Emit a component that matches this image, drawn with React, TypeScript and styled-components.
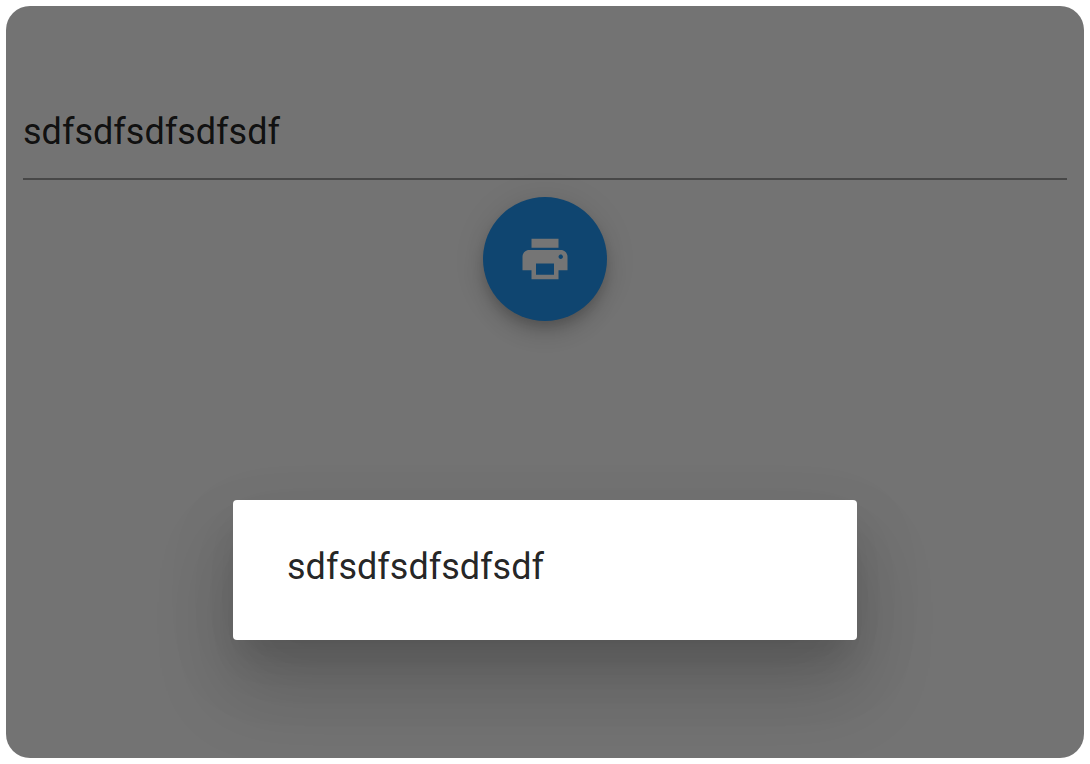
import { useState } from "react";
import styled, { createGlobalStyle } from "styled-components";
import { MdPrint } from "react-icons/md";

const GlobalStyle = createGlobalStyle`
  *, *::before, *::after {
    box-sizing: border-box;
  }

  body {
    margin: 0;
    background: #ffffff;
    font-family: Roboto, "Liberation Sans", sans-serif;
    font-size: 36px;
    line-height: 42px;
    color: rgba(0, 0, 0, 0.87);
  }
`;

const Page = styled.div`
  display: grid;
  min-height: 100vh;
  padding: 6px;
`;

const Screen = styled.div`
  position: relative;
  overflow: hidden;
  border-radius: 24px;
  background: #fafafa;
`;

const Form = styled.form`
  display: flex;
  flex-direction: column;
  align-items: center;
  gap: 17px;
  padding: 80px 17px 17px;
`;

const TextField = styled.input`
  width: 100%;
  height: 94px;
  padding: 0 0 1px;
  border: 0;
  border-bottom: 2px solid rgba(0, 0, 0, 0.38);
  border-radius: 0;
  outline: 0;
  background: transparent;
  color: inherit;
  font: inherit;
`;

const PrintButton = styled.button`
  display: flex;
  align-items: center;
  justify-content: center;
  width: 124px;
  height: 124px;
  padding: 0;
  border: 0;
  border-radius: 50%;
  background: #2196f3;
  color: #ffffff;
  font-size: 54px;
  box-shadow:
    0 7px 11px -2px rgba(0, 0, 0, 0.14),
    0 13px 22px 0 rgba(0, 0, 0, 0.12),
    0 2px 32px 0 rgba(0, 0, 0, 0.1);
`;

const Backdrop = styled.div`
  position: absolute;
  inset: 0;
  display: flex;
  align-items: flex-end;
  justify-content: center;
  padding: 0 88px 118px;
  background: rgba(0, 0, 0, 0.54);
`;

const Dialog = styled.div`
  width: 100%;
  max-width: 624px;
  padding: 46px 54px 52px;
  border-radius: 4px;
  background: #ffffff;
  box-shadow:
    0 24px 33px -10px rgba(0, 0, 0, 0.1),
    0 48px 80px 4px rgba(0, 0, 0, 0.14),
    0 26px 72px 8px rgba(0, 0, 0, 0.06);
`;

const Message = styled.p`
  margin: 0;
`;

export default function App() {
  const [value, setValue] = useState("sdfsdfsdfsdfsdf");

  return (
    <>
      <GlobalStyle />
      <Page>
        <Screen>
          <Form onSubmit={(event) => event.preventDefault()}>
            <TextField
              type="text"
              aria-label="Text"
              spellCheck={false}
              value={value}
              onChange={(event) => setValue(event.target.value)}
            />
            <PrintButton type="submit" aria-label="Print">
              <MdPrint aria-hidden="true" />
            </PrintButton>
          </Form>
          <Backdrop>
            <Dialog role="dialog" aria-modal="true" aria-label="Entered text">
              <Message>{value}</Message>
            </Dialog>
          </Backdrop>
        </Screen>
      </Page>
    </>
  );
}
